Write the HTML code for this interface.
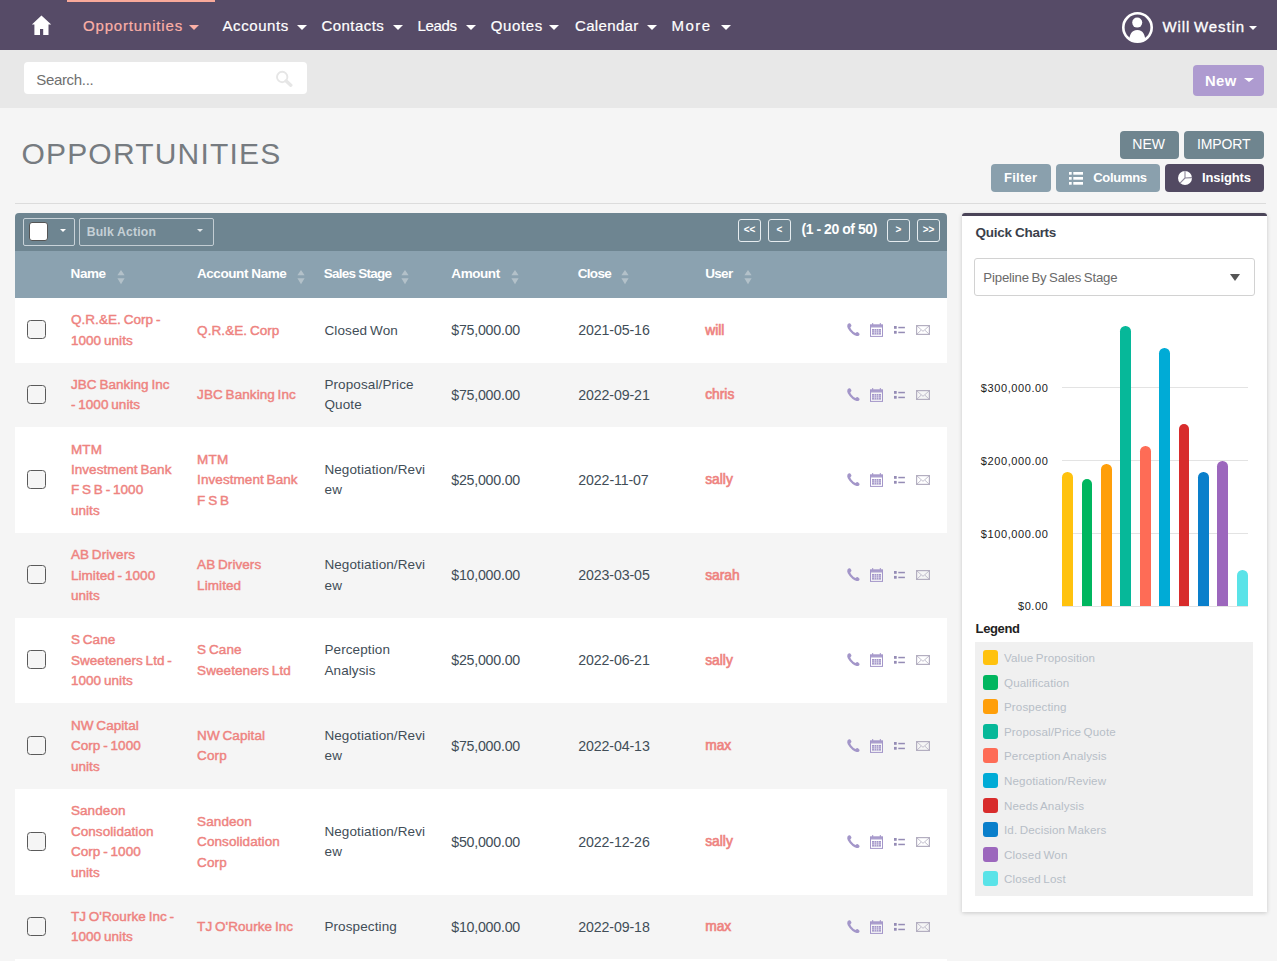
<!DOCTYPE html>
<html><head><meta charset="utf-8"><title>Opportunities</title>
<style>
html,body{margin:0;padding:0;}
body{width:1277px;height:961px;position:relative;overflow:hidden;background:#f5f5f5;font-family:"Liberation Sans", sans-serif;}
.t{position:absolute;white-space:nowrap;}
.caret{position:absolute;width:0;height:0;}
</style></head><body>
<div style="position:absolute;left:0;top:0;width:1277px;height:50px;background:#564b67"></div>
<div style="position:absolute;left:67px;top:0;width:148px;height:2px;background:#f9a99a"></div>
<svg style="position:absolute;left:31px;top:15px" width="21" height="21" viewBox="0 0 21 21"><path d="M10.45 0.4 L20.2 9.6 L17.5 9.6 L17.5 19.9 L12.2 19.9 L12.2 14.05 L9 14.05 L9 19.9 L3.4 19.9 L3.4 9.6 L0.9 9.6 Z" fill="#fff"/></svg>
<div class="t" style="left:83.00px;top:15.80px;font-size:15px;line-height:20px;color:#fbb0a6;font-weight:normal;letter-spacing:0.832px;-webkit-text-stroke:0.2px #fbb0a6;">Opportunities</div>
<div class="caret" style="left:188.5px;top:24.5px;border-left:5.0px solid transparent;border-right:5.0px solid transparent;border-top:5px solid #fbb0a6;"></div>
<div class="t" style="left:222.50px;top:15.80px;font-size:15px;line-height:20px;color:#fff;font-weight:normal;letter-spacing:0.586px;-webkit-text-stroke:0.2px #fff;">Accounts</div>
<div class="caret" style="left:297px;top:24.5px;border-left:5.0px solid transparent;border-right:5.0px solid transparent;border-top:5px solid #fff;"></div>
<div class="t" style="left:321.50px;top:15.80px;font-size:15px;line-height:20px;color:#fff;font-weight:normal;letter-spacing:0.444px;-webkit-text-stroke:0.2px #fff;">Contacts</div>
<div class="caret" style="left:392.5px;top:24.5px;border-left:5.0px solid transparent;border-right:5.0px solid transparent;border-top:5px solid #fff;"></div>
<div class="t" style="left:417.50px;top:15.80px;font-size:15px;line-height:20px;color:#fff;font-weight:normal;letter-spacing:-0.344px;-webkit-text-stroke:0.2px #fff;">Leads</div>
<div class="caret" style="left:465.6px;top:24.5px;border-left:5.0px solid transparent;border-right:5.0px solid transparent;border-top:5px solid #fff;"></div>
<div class="t" style="left:490.70px;top:15.80px;font-size:15px;line-height:20px;color:#fff;font-weight:normal;letter-spacing:0.648px;-webkit-text-stroke:0.2px #fff;">Quotes</div>
<div class="caret" style="left:549.4px;top:24.5px;border-left:5.0px solid transparent;border-right:5.0px solid transparent;border-top:5px solid #fff;"></div>
<div class="t" style="left:575.00px;top:15.80px;font-size:15px;line-height:20px;color:#fff;font-weight:normal;letter-spacing:0.347px;-webkit-text-stroke:0.2px #fff;">Calendar</div>
<div class="caret" style="left:647px;top:24.5px;border-left:5.0px solid transparent;border-right:5.0px solid transparent;border-top:5px solid #fff;"></div>
<div class="t" style="left:671.50px;top:15.80px;font-size:15px;line-height:20px;color:#fff;font-weight:normal;letter-spacing:1.443px;-webkit-text-stroke:0.2px #fff;">More</div>
<div class="caret" style="left:721.3px;top:24.5px;border-left:5.0px solid transparent;border-right:5.0px solid transparent;border-top:5px solid #fff;"></div>
<svg style="position:absolute;left:1121px;top:11px" width="33" height="33" viewBox="0 0 33 33"><defs><clipPath id="uc"><circle cx="16.5" cy="16.5" r="14"/></clipPath></defs><circle cx="16.5" cy="16.5" r="14.2" fill="none" stroke="#fff" stroke-width="2.6"/><circle cx="16.2" cy="11.6" r="5" fill="#fff"/><path d="M8 33 C8 25 9.5 19 16.3 19 C23 19 24.5 25 24.5 33 Z" fill="#fff" clip-path="url(#uc)"/></svg>
<div class="t" style="left:1162.60px;top:17.40px;font-size:15px;line-height:20px;color:#fff;font-weight:normal;letter-spacing:0.863px;-webkit-text-stroke:0.3px #fff;word-spacing:-1.12px;">Will Westin</div>
<div class="caret" style="left:1248.5px;top:25.5px;border-left:4.75px solid transparent;border-right:4.75px solid transparent;border-top:4.5px solid #fff;"></div>
<div style="position:absolute;left:0;top:50px;width:1277px;height:58px;background:#e8e8e8"></div>
<div style="position:absolute;left:24px;top:62px;width:283px;height:32px;background:#fff;border-radius:4px"></div>
<div class="t" style="left:36.20px;top:70.00px;font-size:15px;line-height:20px;color:#6f6f6f;font-weight:normal;letter-spacing:-0.316px;">Search...</div>
<svg style="position:absolute;left:275px;top:70px" width="20" height="17" viewBox="0 0 20 17"><circle cx="7.2" cy="7" r="5.2" fill="none" stroke="#e6e6e6" stroke-width="1.9"/><path d="M11.2 11 L15.8 15.2" stroke="#e6e6e6" stroke-width="3.4" stroke-linecap="round"/></svg>
<div style="position:absolute;left:1193px;top:65px;width:71px;height:31px;background:#ae9bd0;border-radius:4px"></div>
<div class="t" style="left:1205.00px;top:70.87px;font-size:14.8px;line-height:20px;color:#fff;font-weight:bold;letter-spacing:0.371px;">New</div>
<div class="caret" style="left:1244px;top:78px;border-left:5.0px solid transparent;border-right:5.0px solid transparent;border-top:4.5px solid #fff;"></div>
<div style="position:absolute;left:0;top:108px;width:1277px;height:853px;background:#f5f5f5"></div>
<div class="t" style="left:21.40px;top:143.60px;font-size:30px;line-height:20px;color:#767b80;font-weight:normal;letter-spacing:1.202px;">OPPORTUNITIES</div>
<div style="position:absolute;left:15px;top:203px;width:1251px;height:1px;background:#dcdcdc"></div>
<div style="position:absolute;left:1120px;top:131px;width:59px;height:28px;background:#6f858f;border-radius:4px"></div>
<div class="t" style="left:1132.30px;top:134.15px;font-size:14px;line-height:20px;color:#fff;font-weight:normal;letter-spacing:-0.031px;">NEW</div>
<div style="position:absolute;left:1184px;top:131px;width:80px;height:28px;background:#6f858f;border-radius:4px"></div>
<div class="t" style="left:1197.00px;top:134.15px;font-size:14px;line-height:20px;color:#fff;font-weight:normal;letter-spacing:-0.139px;">IMPORT</div>
<div style="position:absolute;left:991px;top:164px;width:60px;height:28px;background:#8aa0ad;border-radius:4px"></div>
<div class="t" style="left:1004.00px;top:167.50px;font-size:13px;line-height:20px;color:#fff;font-weight:bold;letter-spacing:0.243px;">Filter</div>
<div style="position:absolute;left:1056px;top:164px;width:104px;height:28px;background:#8aa0ad;border-radius:4px"></div>
<div class="t" style="left:1093.30px;top:167.50px;font-size:13px;line-height:20px;color:#fff;font-weight:bold;letter-spacing:-0.319px;">Columns</div>
<div style="position:absolute;left:1165px;top:164px;width:99px;height:28px;background:#524a62;border-radius:4px"></div>
<div class="t" style="left:1202.00px;top:167.50px;font-size:13px;line-height:20px;color:#fff;font-weight:bold;letter-spacing:-0.120px;">Insights</div>
<svg style="position:absolute;left:1069px;top:171.6px" width="14" height="13" viewBox="0 0 14 13"><g fill="#fff"><rect x="0" y="0" width="2.7" height="2.7"/><rect x="0" y="5" width="2.7" height="2.7"/><rect x="0" y="10" width="2.7" height="2.7"/><rect x="4.3" y="0" width="9.7" height="2.7"/><rect x="4.3" y="5" width="9.7" height="2.7"/><rect x="4.3" y="10" width="9.7" height="2.7"/></g></svg>
<svg style="position:absolute;left:1177px;top:170px" width="16" height="16" viewBox="0 0 16 16"><circle cx="8" cy="8" r="7" fill="#fff"/><path d="M8 8 L8 0.8 M8 8 L15.2 7.6 M8 8 L3 13.2" stroke="#8d8799" stroke-width="1.1"/></svg>
<div style="position:absolute;left:15px;top:213px;width:932px;height:38px;background:#6e8591;border-radius:4px 4px 0 0"></div>
<div style="position:absolute;left:15px;top:251px;width:932px;height:47px;background:#8ba2b0"></div>
<div style="position:absolute;left:23px;top:218px;width:50px;height:26px;border:1px solid #c9d3d9;border-radius:2px"></div>
<div style="position:absolute;left:28.5px;top:222px;width:17px;height:17px;background:#fff;border:1px solid #555;border-radius:3px"></div>
<div class="caret" style="left:60px;top:229px;border-left:3.5px solid transparent;border-right:3.5px solid transparent;border-top:3.5px solid #fff;"></div>
<div style="position:absolute;left:79px;top:218px;width:133px;height:26px;border:1px solid #c3cdd3;border-radius:2px"></div>
<div class="t" style="left:86.70px;top:221.77px;font-size:12.2px;line-height:20px;color:#c5d0d6;font-weight:bold;letter-spacing:0.197px;">Bulk Action</div>
<div class="caret" style="left:197px;top:229px;border-left:3.5px solid transparent;border-right:3.5px solid transparent;border-top:3.5px solid #dfe5e8;"></div>
<div style="position:absolute;left:738px;top:219px;width:21px;height:21px;border:1px solid #e6ecef;border-radius:3px"></div>
<div class="t" style="left:738px;top:219px;width:23px;height:23px;line-height:22px;text-align:center;font-size:10px;font-weight:bold;color:#fff">&lt;&lt;</div>
<div style="position:absolute;left:768px;top:219px;width:21px;height:21px;border:1px solid #e6ecef;border-radius:3px"></div>
<div class="t" style="left:768px;top:219px;width:23px;height:23px;line-height:22px;text-align:center;font-size:10px;font-weight:bold;color:#fff">&lt;</div>
<div style="position:absolute;left:887px;top:219px;width:21px;height:21px;border:1px solid #e6ecef;border-radius:3px"></div>
<div class="t" style="left:887px;top:219px;width:23px;height:23px;line-height:22px;text-align:center;font-size:10px;font-weight:bold;color:#fff">&gt;</div>
<div style="position:absolute;left:917px;top:219px;width:21px;height:21px;border:1px solid #e6ecef;border-radius:3px"></div>
<div class="t" style="left:917px;top:219px;width:23px;height:23px;line-height:22px;text-align:center;font-size:10px;font-weight:bold;color:#fff">&gt;&gt;</div>
<div class="t" style="left:801.50px;top:219.25px;font-size:14px;line-height:20px;color:#fff;font-weight:bold;letter-spacing:-0.453px;">(1 - 20 of 50)</div>
<div class="t" style="left:70.60px;top:263.52px;font-size:13.5px;line-height:20px;color:#fff;font-weight:bold;letter-spacing:-0.458px;">Name</div>
<svg style="position:absolute;left:116.8px;top:269.5px" width="8" height="15" viewBox="0 0 8 15"><path d="M4 0 L7.6 5.3 L0.4 5.3 Z M0.4 8.2 L7.6 8.2 L4 14.3 Z" fill="#b3c1c9"/></svg>
<div class="t" style="left:196.90px;top:263.52px;font-size:13.5px;line-height:20px;color:#fff;font-weight:bold;letter-spacing:-0.412px;">Account Name</div>
<svg style="position:absolute;left:297.0px;top:269.5px" width="8" height="15" viewBox="0 0 8 15"><path d="M4 0 L7.6 5.3 L0.4 5.3 Z M0.4 8.2 L7.6 8.2 L4 14.3 Z" fill="#b3c1c9"/></svg>
<div class="t" style="left:323.80px;top:263.52px;font-size:13.5px;line-height:20px;color:#fff;font-weight:bold;letter-spacing:-0.769px;">Sales Stage</div>
<svg style="position:absolute;left:401.3px;top:269.5px" width="8" height="15" viewBox="0 0 8 15"><path d="M4 0 L7.6 5.3 L0.4 5.3 Z M0.4 8.2 L7.6 8.2 L4 14.3 Z" fill="#b3c1c9"/></svg>
<div class="t" style="left:451.30px;top:263.52px;font-size:13.5px;line-height:20px;color:#fff;font-weight:bold;letter-spacing:-0.418px;">Amount</div>
<svg style="position:absolute;left:510.5px;top:269.5px" width="8" height="15" viewBox="0 0 8 15"><path d="M4 0 L7.6 5.3 L0.4 5.3 Z M0.4 8.2 L7.6 8.2 L4 14.3 Z" fill="#b3c1c9"/></svg>
<div class="t" style="left:577.80px;top:263.52px;font-size:13.5px;line-height:20px;color:#fff;font-weight:bold;letter-spacing:-0.715px;">Close</div>
<svg style="position:absolute;left:621.3px;top:269.5px" width="8" height="15" viewBox="0 0 8 15"><path d="M4 0 L7.6 5.3 L0.4 5.3 Z M0.4 8.2 L7.6 8.2 L4 14.3 Z" fill="#b3c1c9"/></svg>
<div class="t" style="left:705.20px;top:263.52px;font-size:13.5px;line-height:20px;color:#fff;font-weight:bold;letter-spacing:-0.675px;">User</div>
<svg style="position:absolute;left:744.0999999999999px;top:269.5px" width="8" height="15" viewBox="0 0 8 15"><path d="M4 0 L7.6 5.3 L0.4 5.3 Z M0.4 8.2 L7.6 8.2 L4 14.3 Z" fill="#b3c1c9"/></svg>
<div style="position:absolute;left:15px;top:297.80px;width:932px;height:65.30px;background:#ffffff"></div>
<div style="position:absolute;left:27px;top:320.45px;width:17px;height:17px;border:1.5px solid #5a5a5a;border-radius:3.5px;background:#f5f5f5"></div>
<div class="t" style="left:70.90px;top:310.43px;font-size:13.5px;line-height:20px;color:#ee8380;font-weight:normal;letter-spacing:0.068px;word-spacing:-1.05px;-webkit-text-stroke:0.45px #ee8380;">Q.R.&amp;E. Corp -</div>
<div class="t" style="left:70.90px;top:330.88px;font-size:13.5px;line-height:20px;color:#ee8380;font-weight:normal;letter-spacing:0.068px;word-spacing:-1.05px;-webkit-text-stroke:0.45px #ee8380;">1000 units</div>
<div class="t" style="left:197.10px;top:320.65px;font-size:13.5px;line-height:20px;color:#ee8380;font-weight:normal;letter-spacing:0.074px;word-spacing:-1.05px;-webkit-text-stroke:0.45px #ee8380;">Q.R.&amp;E. Corp</div>
<div class="t" style="left:324.40px;top:320.65px;font-size:13.5px;line-height:20px;color:#414d57;font-weight:normal;letter-spacing:0.128px;word-spacing:-1.05px;">Closed Won</div>
<div class="t" style="left:451.30px;top:320.41px;font-size:14.2px;line-height:20px;color:#414d57;font-weight:normal;letter-spacing:-0.237px;word-spacing:-1.05px;">$75,000.00</div>
<div class="t" style="left:578.30px;top:320.41px;font-size:14.2px;line-height:20px;color:#414d57;font-weight:normal;letter-spacing:-0.121px;word-spacing:-1.05px;">2021-05-16</div>
<div class="t" style="left:705.23px;top:320.55px;font-size:13.8px;line-height:20px;color:#ee8380;font-weight:normal;letter-spacing:0.000px;word-spacing:-1.05px;-webkit-text-stroke:0.65px #ee8380;">will</div>
<svg style="position:absolute;left:846px;top:322.25px" width="15" height="15" viewBox="0 0 15 15"><path d="M3.2 1.2 Q2 1.6 1.4 2.8 Q0.9 4.4 1.8 6.2 Q3.6 9.6 6.6 12 Q8.6 13.6 10.6 14 Q12 14.2 13 13.4 Q13.9 12.6 13.5 11.7 L12 10.2 Q11.2 9.6 10.5 10.2 L9.6 11 Q7.3 10 5.3 7.4 Q4.4 6 4.3 5.3 L5.1 4.6 Q5.8 3.9 5.3 3.1 L4.3 1.5 Q3.9 1 3.2 1.2 Z" fill="#a396c9"/></svg>
<svg style="position:absolute;left:870px;top:323.15px" width="13" height="14" viewBox="0 0 13 14"><rect x="2.2" y="0" width="1" height="2.2" fill="#a396c9"/><rect x="9.8" y="0" width="1" height="2.2" fill="#a396c9"/><rect x="0" y="1.6" width="13" height="2.9" fill="#a396c9" opacity="0.9"/><rect x="0.5" y="2" width="12" height="11.4" fill="none" stroke="#a396c9" stroke-width="1"/><rect x="2" y="6" width="9" height="5.6" fill="#a396c9"/><g fill="#fff" opacity="0.75"><rect x="4.1" y="6" width="0.6" height="5.6"/><rect x="6.2" y="6" width="0.6" height="5.6"/><rect x="8.3" y="6" width="0.6" height="5.6"/><rect x="2" y="7.7" width="9" height="0.5"/><rect x="2" y="9.6" width="9" height="0.5"/></g></svg>
<svg style="position:absolute;left:894px;top:326.15px" width="11" height="8" viewBox="0 0 11 8"><g fill="#958cb5"><rect x="0" y="0" width="2.7" height="2.8"/><rect x="0" y="4.9" width="2.7" height="2.8"/><rect x="4.3" y="0.8" width="6.6" height="1.5"/><rect x="4.3" y="5.7" width="6.6" height="1.5"/></g></svg>
<svg style="position:absolute;left:916px;top:325.45px" width="14" height="10" viewBox="0 0 14 10"><rect x="0.6" y="0.6" width="12.8" height="8.8" fill="none" stroke="#b3aec0" stroke-width="1.2"/><path d="M1 1 L7 6.3 L13 1 M1 9 L5 5.3 M13 9 L9 5.3" fill="none" stroke="#b3aec0" stroke-width="0.8"/></svg>
<div style="position:absolute;left:15px;top:363.10px;width:932px;height:63.80px;background:#f5f5f5"></div>
<div style="position:absolute;left:27px;top:385.00px;width:17px;height:17px;border:1.5px solid #5a5a5a;border-radius:3.5px;background:#f5f5f5"></div>
<div class="t" style="left:70.90px;top:374.98px;font-size:13.5px;line-height:20px;color:#ee8380;font-weight:normal;letter-spacing:0.070px;word-spacing:-1.05px;-webkit-text-stroke:0.45px #ee8380;">JBC Banking Inc</div>
<div class="t" style="left:70.90px;top:395.43px;font-size:13.5px;line-height:20px;color:#ee8380;font-weight:normal;letter-spacing:0.062px;word-spacing:-1.05px;-webkit-text-stroke:0.45px #ee8380;">- 1000 units</div>
<div class="t" style="left:197.10px;top:385.20px;font-size:13.5px;line-height:20px;color:#ee8380;font-weight:normal;letter-spacing:0.070px;word-spacing:-1.05px;-webkit-text-stroke:0.45px #ee8380;">JBC Banking Inc</div>
<div class="t" style="left:324.40px;top:374.98px;font-size:13.5px;line-height:20px;color:#414d57;font-weight:normal;letter-spacing:0.108px;word-spacing:-1.05px;">Proposal/Price</div>
<div class="t" style="left:324.40px;top:395.43px;font-size:13.5px;line-height:20px;color:#414d57;font-weight:normal;letter-spacing:0.147px;word-spacing:-1.05px;">Quote</div>
<div class="t" style="left:451.30px;top:384.96px;font-size:14.2px;line-height:20px;color:#414d57;font-weight:normal;letter-spacing:-0.237px;word-spacing:-1.05px;">$75,000.00</div>
<div class="t" style="left:578.30px;top:384.96px;font-size:14.2px;line-height:20px;color:#414d57;font-weight:normal;letter-spacing:-0.121px;word-spacing:-1.05px;">2022-09-21</div>
<div class="t" style="left:705.20px;top:385.10px;font-size:13.8px;line-height:20px;color:#ee8380;font-weight:normal;letter-spacing:0.000px;word-spacing:-1.05px;-webkit-text-stroke:0.65px #ee8380;">chris</div>
<svg style="position:absolute;left:846px;top:386.80px" width="15" height="15" viewBox="0 0 15 15"><path d="M3.2 1.2 Q2 1.6 1.4 2.8 Q0.9 4.4 1.8 6.2 Q3.6 9.6 6.6 12 Q8.6 13.6 10.6 14 Q12 14.2 13 13.4 Q13.9 12.6 13.5 11.7 L12 10.2 Q11.2 9.6 10.5 10.2 L9.6 11 Q7.3 10 5.3 7.4 Q4.4 6 4.3 5.3 L5.1 4.6 Q5.8 3.9 5.3 3.1 L4.3 1.5 Q3.9 1 3.2 1.2 Z" fill="#a396c9"/></svg>
<svg style="position:absolute;left:870px;top:387.70px" width="13" height="14" viewBox="0 0 13 14"><rect x="2.2" y="0" width="1" height="2.2" fill="#a396c9"/><rect x="9.8" y="0" width="1" height="2.2" fill="#a396c9"/><rect x="0" y="1.6" width="13" height="2.9" fill="#a396c9" opacity="0.9"/><rect x="0.5" y="2" width="12" height="11.4" fill="none" stroke="#a396c9" stroke-width="1"/><rect x="2" y="6" width="9" height="5.6" fill="#a396c9"/><g fill="#fff" opacity="0.75"><rect x="4.1" y="6" width="0.6" height="5.6"/><rect x="6.2" y="6" width="0.6" height="5.6"/><rect x="8.3" y="6" width="0.6" height="5.6"/><rect x="2" y="7.7" width="9" height="0.5"/><rect x="2" y="9.6" width="9" height="0.5"/></g></svg>
<svg style="position:absolute;left:894px;top:390.70px" width="11" height="8" viewBox="0 0 11 8"><g fill="#958cb5"><rect x="0" y="0" width="2.7" height="2.8"/><rect x="0" y="4.9" width="2.7" height="2.8"/><rect x="4.3" y="0.8" width="6.6" height="1.5"/><rect x="4.3" y="5.7" width="6.6" height="1.5"/></g></svg>
<svg style="position:absolute;left:916px;top:390.00px" width="14" height="10" viewBox="0 0 14 10"><rect x="0.6" y="0.6" width="12.8" height="8.8" fill="none" stroke="#b3aec0" stroke-width="1.2"/><path d="M1 1 L7 6.3 L13 1 M1 9 L5 5.3 M13 9 L9 5.3" fill="none" stroke="#b3aec0" stroke-width="0.8"/></svg>
<div style="position:absolute;left:15px;top:426.90px;width:932px;height:106.20px;background:#ffffff"></div>
<div style="position:absolute;left:27px;top:470.00px;width:17px;height:17px;border:1.5px solid #5a5a5a;border-radius:3.5px;background:#f5f5f5"></div>
<div class="t" style="left:70.90px;top:439.53px;font-size:13.5px;line-height:20px;color:#ee8380;font-weight:normal;letter-spacing:0.154px;word-spacing:-1.05px;-webkit-text-stroke:0.45px #ee8380;">MTM</div>
<div class="t" style="left:70.90px;top:459.98px;font-size:13.5px;line-height:20px;color:#ee8380;font-weight:normal;letter-spacing:0.071px;word-spacing:-1.05px;-webkit-text-stroke:0.45px #ee8380;">Investment Bank</div>
<div class="t" style="left:70.90px;top:480.43px;font-size:13.5px;line-height:20px;color:#ee8380;font-weight:normal;letter-spacing:0.065px;word-spacing:-1.05px;-webkit-text-stroke:0.45px #ee8380;">F S B - 1000</div>
<div class="t" style="left:70.90px;top:500.88px;font-size:13.5px;line-height:20px;color:#ee8380;font-weight:normal;letter-spacing:0.071px;word-spacing:-1.05px;-webkit-text-stroke:0.45px #ee8380;">units</div>
<div class="t" style="left:197.10px;top:449.75px;font-size:13.5px;line-height:20px;color:#ee8380;font-weight:normal;letter-spacing:0.154px;word-spacing:-1.05px;-webkit-text-stroke:0.45px #ee8380;">MTM</div>
<div class="t" style="left:197.10px;top:470.20px;font-size:13.5px;line-height:20px;color:#ee8380;font-weight:normal;letter-spacing:0.071px;word-spacing:-1.05px;-webkit-text-stroke:0.45px #ee8380;">Investment Bank</div>
<div class="t" style="left:197.10px;top:490.65px;font-size:13.5px;line-height:20px;color:#ee8380;font-weight:normal;letter-spacing:0.079px;word-spacing:-1.05px;-webkit-text-stroke:0.45px #ee8380;">F S B</div>
<div class="t" style="left:324.40px;top:459.98px;font-size:13.5px;line-height:20px;color:#414d57;font-weight:normal;letter-spacing:0.106px;word-spacing:-1.05px;">Negotiation/Revi</div>
<div class="t" style="left:324.40px;top:480.43px;font-size:13.5px;line-height:20px;color:#414d57;font-weight:normal;letter-spacing:0.277px;word-spacing:-1.05px;">ew</div>
<div class="t" style="left:451.30px;top:469.96px;font-size:14.2px;line-height:20px;color:#414d57;font-weight:normal;letter-spacing:-0.237px;word-spacing:-1.05px;">$25,000.00</div>
<div class="t" style="left:578.30px;top:469.96px;font-size:14.2px;line-height:20px;color:#414d57;font-weight:normal;letter-spacing:-0.119px;word-spacing:-1.05px;">2022-11-07</div>
<div class="t" style="left:705.20px;top:470.10px;font-size:13.8px;line-height:20px;color:#ee8380;font-weight:normal;letter-spacing:0.000px;word-spacing:-1.05px;-webkit-text-stroke:0.65px #ee8380;">sally</div>
<svg style="position:absolute;left:846px;top:471.80px" width="15" height="15" viewBox="0 0 15 15"><path d="M3.2 1.2 Q2 1.6 1.4 2.8 Q0.9 4.4 1.8 6.2 Q3.6 9.6 6.6 12 Q8.6 13.6 10.6 14 Q12 14.2 13 13.4 Q13.9 12.6 13.5 11.7 L12 10.2 Q11.2 9.6 10.5 10.2 L9.6 11 Q7.3 10 5.3 7.4 Q4.4 6 4.3 5.3 L5.1 4.6 Q5.8 3.9 5.3 3.1 L4.3 1.5 Q3.9 1 3.2 1.2 Z" fill="#a396c9"/></svg>
<svg style="position:absolute;left:870px;top:472.70px" width="13" height="14" viewBox="0 0 13 14"><rect x="2.2" y="0" width="1" height="2.2" fill="#a396c9"/><rect x="9.8" y="0" width="1" height="2.2" fill="#a396c9"/><rect x="0" y="1.6" width="13" height="2.9" fill="#a396c9" opacity="0.9"/><rect x="0.5" y="2" width="12" height="11.4" fill="none" stroke="#a396c9" stroke-width="1"/><rect x="2" y="6" width="9" height="5.6" fill="#a396c9"/><g fill="#fff" opacity="0.75"><rect x="4.1" y="6" width="0.6" height="5.6"/><rect x="6.2" y="6" width="0.6" height="5.6"/><rect x="8.3" y="6" width="0.6" height="5.6"/><rect x="2" y="7.7" width="9" height="0.5"/><rect x="2" y="9.6" width="9" height="0.5"/></g></svg>
<svg style="position:absolute;left:894px;top:475.70px" width="11" height="8" viewBox="0 0 11 8"><g fill="#958cb5"><rect x="0" y="0" width="2.7" height="2.8"/><rect x="0" y="4.9" width="2.7" height="2.8"/><rect x="4.3" y="0.8" width="6.6" height="1.5"/><rect x="4.3" y="5.7" width="6.6" height="1.5"/></g></svg>
<svg style="position:absolute;left:916px;top:475.00px" width="14" height="10" viewBox="0 0 14 10"><rect x="0.6" y="0.6" width="12.8" height="8.8" fill="none" stroke="#b3aec0" stroke-width="1.2"/><path d="M1 1 L7 6.3 L13 1 M1 9 L5 5.3 M13 9 L9 5.3" fill="none" stroke="#b3aec0" stroke-width="0.8"/></svg>
<div style="position:absolute;left:15px;top:533.10px;width:932px;height:84.70px;background:#f5f5f5"></div>
<div style="position:absolute;left:27px;top:565.45px;width:17px;height:17px;border:1.5px solid #5a5a5a;border-radius:3.5px;background:#f5f5f5"></div>
<div class="t" style="left:70.90px;top:545.20px;font-size:13.5px;line-height:20px;color:#ee8380;font-weight:normal;letter-spacing:0.071px;word-spacing:-1.05px;-webkit-text-stroke:0.45px #ee8380;">AB Drivers</div>
<div class="t" style="left:70.90px;top:565.65px;font-size:13.5px;line-height:20px;color:#ee8380;font-weight:normal;letter-spacing:0.064px;word-spacing:-1.05px;-webkit-text-stroke:0.45px #ee8380;">Limited - 1000</div>
<div class="t" style="left:70.90px;top:586.10px;font-size:13.5px;line-height:20px;color:#ee8380;font-weight:normal;letter-spacing:0.071px;word-spacing:-1.05px;-webkit-text-stroke:0.45px #ee8380;">units</div>
<div class="t" style="left:197.10px;top:555.43px;font-size:13.5px;line-height:20px;color:#ee8380;font-weight:normal;letter-spacing:0.071px;word-spacing:-1.05px;-webkit-text-stroke:0.45px #ee8380;">AB Drivers</div>
<div class="t" style="left:197.10px;top:575.88px;font-size:13.5px;line-height:20px;color:#ee8380;font-weight:normal;letter-spacing:0.073px;word-spacing:-1.05px;-webkit-text-stroke:0.45px #ee8380;">Limited</div>
<div class="t" style="left:324.40px;top:555.43px;font-size:13.5px;line-height:20px;color:#414d57;font-weight:normal;letter-spacing:0.106px;word-spacing:-1.05px;">Negotiation/Revi</div>
<div class="t" style="left:324.40px;top:575.88px;font-size:13.5px;line-height:20px;color:#414d57;font-weight:normal;letter-spacing:0.277px;word-spacing:-1.05px;">ew</div>
<div class="t" style="left:451.30px;top:565.41px;font-size:14.2px;line-height:20px;color:#414d57;font-weight:normal;letter-spacing:-0.237px;word-spacing:-1.05px;">$10,000.00</div>
<div class="t" style="left:578.30px;top:565.41px;font-size:14.2px;line-height:20px;color:#414d57;font-weight:normal;letter-spacing:-0.121px;word-spacing:-1.05px;">2023-03-05</div>
<div class="t" style="left:705.20px;top:565.55px;font-size:13.8px;line-height:20px;color:#ee8380;font-weight:normal;letter-spacing:0.000px;word-spacing:-1.05px;-webkit-text-stroke:0.65px #ee8380;">sarah</div>
<svg style="position:absolute;left:846px;top:567.25px" width="15" height="15" viewBox="0 0 15 15"><path d="M3.2 1.2 Q2 1.6 1.4 2.8 Q0.9 4.4 1.8 6.2 Q3.6 9.6 6.6 12 Q8.6 13.6 10.6 14 Q12 14.2 13 13.4 Q13.9 12.6 13.5 11.7 L12 10.2 Q11.2 9.6 10.5 10.2 L9.6 11 Q7.3 10 5.3 7.4 Q4.4 6 4.3 5.3 L5.1 4.6 Q5.8 3.9 5.3 3.1 L4.3 1.5 Q3.9 1 3.2 1.2 Z" fill="#a396c9"/></svg>
<svg style="position:absolute;left:870px;top:568.15px" width="13" height="14" viewBox="0 0 13 14"><rect x="2.2" y="0" width="1" height="2.2" fill="#a396c9"/><rect x="9.8" y="0" width="1" height="2.2" fill="#a396c9"/><rect x="0" y="1.6" width="13" height="2.9" fill="#a396c9" opacity="0.9"/><rect x="0.5" y="2" width="12" height="11.4" fill="none" stroke="#a396c9" stroke-width="1"/><rect x="2" y="6" width="9" height="5.6" fill="#a396c9"/><g fill="#fff" opacity="0.75"><rect x="4.1" y="6" width="0.6" height="5.6"/><rect x="6.2" y="6" width="0.6" height="5.6"/><rect x="8.3" y="6" width="0.6" height="5.6"/><rect x="2" y="7.7" width="9" height="0.5"/><rect x="2" y="9.6" width="9" height="0.5"/></g></svg>
<svg style="position:absolute;left:894px;top:571.15px" width="11" height="8" viewBox="0 0 11 8"><g fill="#958cb5"><rect x="0" y="0" width="2.7" height="2.8"/><rect x="0" y="4.9" width="2.7" height="2.8"/><rect x="4.3" y="0.8" width="6.6" height="1.5"/><rect x="4.3" y="5.7" width="6.6" height="1.5"/></g></svg>
<svg style="position:absolute;left:916px;top:570.45px" width="14" height="10" viewBox="0 0 14 10"><rect x="0.6" y="0.6" width="12.8" height="8.8" fill="none" stroke="#b3aec0" stroke-width="1.2"/><path d="M1 1 L7 6.3 L13 1 M1 9 L5 5.3 M13 9 L9 5.3" fill="none" stroke="#b3aec0" stroke-width="0.8"/></svg>
<div style="position:absolute;left:15px;top:617.80px;width:932px;height:85.30px;background:#ffffff"></div>
<div style="position:absolute;left:27px;top:650.45px;width:17px;height:17px;border:1.5px solid #5a5a5a;border-radius:3.5px;background:#f5f5f5"></div>
<div class="t" style="left:70.90px;top:630.20px;font-size:13.5px;line-height:20px;color:#ee8380;font-weight:normal;letter-spacing:0.088px;word-spacing:-1.05px;-webkit-text-stroke:0.45px #ee8380;">S Cane</div>
<div class="t" style="left:70.90px;top:650.65px;font-size:13.5px;line-height:20px;color:#ee8380;font-weight:normal;letter-spacing:0.067px;word-spacing:-1.05px;-webkit-text-stroke:0.45px #ee8380;">Sweeteners Ltd -</div>
<div class="t" style="left:70.90px;top:671.10px;font-size:13.5px;line-height:20px;color:#ee8380;font-weight:normal;letter-spacing:0.068px;word-spacing:-1.05px;-webkit-text-stroke:0.45px #ee8380;">1000 units</div>
<div class="t" style="left:197.10px;top:640.43px;font-size:13.5px;line-height:20px;color:#ee8380;font-weight:normal;letter-spacing:0.088px;word-spacing:-1.05px;-webkit-text-stroke:0.45px #ee8380;">S Cane</div>
<div class="t" style="left:197.10px;top:660.88px;font-size:13.5px;line-height:20px;color:#ee8380;font-weight:normal;letter-spacing:0.071px;word-spacing:-1.05px;-webkit-text-stroke:0.45px #ee8380;">Sweeteners Ltd</div>
<div class="t" style="left:324.40px;top:640.43px;font-size:13.5px;line-height:20px;color:#414d57;font-weight:normal;letter-spacing:0.115px;word-spacing:-1.05px;">Perception</div>
<div class="t" style="left:324.40px;top:660.88px;font-size:13.5px;line-height:20px;color:#414d57;font-weight:normal;letter-spacing:0.115px;word-spacing:-1.05px;">Analysis</div>
<div class="t" style="left:451.30px;top:650.41px;font-size:14.2px;line-height:20px;color:#414d57;font-weight:normal;letter-spacing:-0.237px;word-spacing:-1.05px;">$25,000.00</div>
<div class="t" style="left:578.30px;top:650.41px;font-size:14.2px;line-height:20px;color:#414d57;font-weight:normal;letter-spacing:-0.121px;word-spacing:-1.05px;">2022-06-21</div>
<div class="t" style="left:705.20px;top:650.55px;font-size:13.8px;line-height:20px;color:#ee8380;font-weight:normal;letter-spacing:0.000px;word-spacing:-1.05px;-webkit-text-stroke:0.65px #ee8380;">sally</div>
<svg style="position:absolute;left:846px;top:652.25px" width="15" height="15" viewBox="0 0 15 15"><path d="M3.2 1.2 Q2 1.6 1.4 2.8 Q0.9 4.4 1.8 6.2 Q3.6 9.6 6.6 12 Q8.6 13.6 10.6 14 Q12 14.2 13 13.4 Q13.9 12.6 13.5 11.7 L12 10.2 Q11.2 9.6 10.5 10.2 L9.6 11 Q7.3 10 5.3 7.4 Q4.4 6 4.3 5.3 L5.1 4.6 Q5.8 3.9 5.3 3.1 L4.3 1.5 Q3.9 1 3.2 1.2 Z" fill="#a396c9"/></svg>
<svg style="position:absolute;left:870px;top:653.15px" width="13" height="14" viewBox="0 0 13 14"><rect x="2.2" y="0" width="1" height="2.2" fill="#a396c9"/><rect x="9.8" y="0" width="1" height="2.2" fill="#a396c9"/><rect x="0" y="1.6" width="13" height="2.9" fill="#a396c9" opacity="0.9"/><rect x="0.5" y="2" width="12" height="11.4" fill="none" stroke="#a396c9" stroke-width="1"/><rect x="2" y="6" width="9" height="5.6" fill="#a396c9"/><g fill="#fff" opacity="0.75"><rect x="4.1" y="6" width="0.6" height="5.6"/><rect x="6.2" y="6" width="0.6" height="5.6"/><rect x="8.3" y="6" width="0.6" height="5.6"/><rect x="2" y="7.7" width="9" height="0.5"/><rect x="2" y="9.6" width="9" height="0.5"/></g></svg>
<svg style="position:absolute;left:894px;top:656.15px" width="11" height="8" viewBox="0 0 11 8"><g fill="#958cb5"><rect x="0" y="0" width="2.7" height="2.8"/><rect x="0" y="4.9" width="2.7" height="2.8"/><rect x="4.3" y="0.8" width="6.6" height="1.5"/><rect x="4.3" y="5.7" width="6.6" height="1.5"/></g></svg>
<svg style="position:absolute;left:916px;top:655.45px" width="14" height="10" viewBox="0 0 14 10"><rect x="0.6" y="0.6" width="12.8" height="8.8" fill="none" stroke="#b3aec0" stroke-width="1.2"/><path d="M1 1 L7 6.3 L13 1 M1 9 L5 5.3 M13 9 L9 5.3" fill="none" stroke="#b3aec0" stroke-width="0.8"/></svg>
<div style="position:absolute;left:15px;top:703.10px;width:932px;height:85.90px;background:#f5f5f5"></div>
<div style="position:absolute;left:27px;top:736.05px;width:17px;height:17px;border:1.5px solid #5a5a5a;border-radius:3.5px;background:#f5f5f5"></div>
<div class="t" style="left:70.90px;top:715.80px;font-size:13.5px;line-height:20px;color:#ee8380;font-weight:normal;letter-spacing:0.075px;word-spacing:-1.05px;-webkit-text-stroke:0.45px #ee8380;">NW Capital</div>
<div class="t" style="left:70.90px;top:736.25px;font-size:13.5px;line-height:20px;color:#ee8380;font-weight:normal;letter-spacing:0.069px;word-spacing:-1.05px;-webkit-text-stroke:0.45px #ee8380;">Corp - 1000</div>
<div class="t" style="left:70.90px;top:756.70px;font-size:13.5px;line-height:20px;color:#ee8380;font-weight:normal;letter-spacing:0.071px;word-spacing:-1.05px;-webkit-text-stroke:0.45px #ee8380;">units</div>
<div class="t" style="left:197.10px;top:726.02px;font-size:13.5px;line-height:20px;color:#ee8380;font-weight:normal;letter-spacing:0.075px;word-spacing:-1.05px;-webkit-text-stroke:0.45px #ee8380;">NW Capital</div>
<div class="t" style="left:197.10px;top:746.48px;font-size:13.5px;line-height:20px;color:#ee8380;font-weight:normal;letter-spacing:0.098px;word-spacing:-1.05px;-webkit-text-stroke:0.45px #ee8380;">Corp</div>
<div class="t" style="left:324.40px;top:726.02px;font-size:13.5px;line-height:20px;color:#414d57;font-weight:normal;letter-spacing:0.106px;word-spacing:-1.05px;">Negotiation/Revi</div>
<div class="t" style="left:324.40px;top:746.48px;font-size:13.5px;line-height:20px;color:#414d57;font-weight:normal;letter-spacing:0.277px;word-spacing:-1.05px;">ew</div>
<div class="t" style="left:451.30px;top:736.01px;font-size:14.2px;line-height:20px;color:#414d57;font-weight:normal;letter-spacing:-0.237px;word-spacing:-1.05px;">$75,000.00</div>
<div class="t" style="left:578.30px;top:736.01px;font-size:14.2px;line-height:20px;color:#414d57;font-weight:normal;letter-spacing:-0.121px;word-spacing:-1.05px;">2022-04-13</div>
<div class="t" style="left:705.20px;top:736.15px;font-size:13.8px;line-height:20px;color:#ee8380;font-weight:normal;letter-spacing:0.000px;word-spacing:-1.05px;-webkit-text-stroke:0.65px #ee8380;">max</div>
<svg style="position:absolute;left:846px;top:737.85px" width="15" height="15" viewBox="0 0 15 15"><path d="M3.2 1.2 Q2 1.6 1.4 2.8 Q0.9 4.4 1.8 6.2 Q3.6 9.6 6.6 12 Q8.6 13.6 10.6 14 Q12 14.2 13 13.4 Q13.9 12.6 13.5 11.7 L12 10.2 Q11.2 9.6 10.5 10.2 L9.6 11 Q7.3 10 5.3 7.4 Q4.4 6 4.3 5.3 L5.1 4.6 Q5.8 3.9 5.3 3.1 L4.3 1.5 Q3.9 1 3.2 1.2 Z" fill="#a396c9"/></svg>
<svg style="position:absolute;left:870px;top:738.75px" width="13" height="14" viewBox="0 0 13 14"><rect x="2.2" y="0" width="1" height="2.2" fill="#a396c9"/><rect x="9.8" y="0" width="1" height="2.2" fill="#a396c9"/><rect x="0" y="1.6" width="13" height="2.9" fill="#a396c9" opacity="0.9"/><rect x="0.5" y="2" width="12" height="11.4" fill="none" stroke="#a396c9" stroke-width="1"/><rect x="2" y="6" width="9" height="5.6" fill="#a396c9"/><g fill="#fff" opacity="0.75"><rect x="4.1" y="6" width="0.6" height="5.6"/><rect x="6.2" y="6" width="0.6" height="5.6"/><rect x="8.3" y="6" width="0.6" height="5.6"/><rect x="2" y="7.7" width="9" height="0.5"/><rect x="2" y="9.6" width="9" height="0.5"/></g></svg>
<svg style="position:absolute;left:894px;top:741.75px" width="11" height="8" viewBox="0 0 11 8"><g fill="#958cb5"><rect x="0" y="0" width="2.7" height="2.8"/><rect x="0" y="4.9" width="2.7" height="2.8"/><rect x="4.3" y="0.8" width="6.6" height="1.5"/><rect x="4.3" y="5.7" width="6.6" height="1.5"/></g></svg>
<svg style="position:absolute;left:916px;top:741.05px" width="14" height="10" viewBox="0 0 14 10"><rect x="0.6" y="0.6" width="12.8" height="8.8" fill="none" stroke="#b3aec0" stroke-width="1.2"/><path d="M1 1 L7 6.3 L13 1 M1 9 L5 5.3 M13 9 L9 5.3" fill="none" stroke="#b3aec0" stroke-width="0.8"/></svg>
<div style="position:absolute;left:15px;top:789.00px;width:932px;height:105.70px;background:#ffffff"></div>
<div style="position:absolute;left:27px;top:831.85px;width:17px;height:17px;border:1.5px solid #5a5a5a;border-radius:3.5px;background:#f5f5f5"></div>
<div class="t" style="left:70.90px;top:801.38px;font-size:13.5px;line-height:20px;color:#ee8380;font-weight:normal;letter-spacing:0.090px;word-spacing:-1.05px;-webkit-text-stroke:0.45px #ee8380;">Sandeon</div>
<div class="t" style="left:70.90px;top:821.83px;font-size:13.5px;line-height:20px;color:#ee8380;font-weight:normal;letter-spacing:0.068px;word-spacing:-1.05px;-webkit-text-stroke:0.45px #ee8380;">Consolidation</div>
<div class="t" style="left:70.90px;top:842.28px;font-size:13.5px;line-height:20px;color:#ee8380;font-weight:normal;letter-spacing:0.069px;word-spacing:-1.05px;-webkit-text-stroke:0.45px #ee8380;">Corp - 1000</div>
<div class="t" style="left:70.90px;top:862.73px;font-size:13.5px;line-height:20px;color:#ee8380;font-weight:normal;letter-spacing:0.071px;word-spacing:-1.05px;-webkit-text-stroke:0.45px #ee8380;">units</div>
<div class="t" style="left:197.10px;top:811.60px;font-size:13.5px;line-height:20px;color:#ee8380;font-weight:normal;letter-spacing:0.090px;word-spacing:-1.05px;-webkit-text-stroke:0.45px #ee8380;">Sandeon</div>
<div class="t" style="left:197.10px;top:832.05px;font-size:13.5px;line-height:20px;color:#ee8380;font-weight:normal;letter-spacing:0.068px;word-spacing:-1.05px;-webkit-text-stroke:0.45px #ee8380;">Consolidation</div>
<div class="t" style="left:197.10px;top:852.50px;font-size:13.5px;line-height:20px;color:#ee8380;font-weight:normal;letter-spacing:0.098px;word-spacing:-1.05px;-webkit-text-stroke:0.45px #ee8380;">Corp</div>
<div class="t" style="left:324.40px;top:821.83px;font-size:13.5px;line-height:20px;color:#414d57;font-weight:normal;letter-spacing:0.106px;word-spacing:-1.05px;">Negotiation/Revi</div>
<div class="t" style="left:324.40px;top:842.28px;font-size:13.5px;line-height:20px;color:#414d57;font-weight:normal;letter-spacing:0.277px;word-spacing:-1.05px;">ew</div>
<div class="t" style="left:451.30px;top:831.81px;font-size:14.2px;line-height:20px;color:#414d57;font-weight:normal;letter-spacing:-0.237px;word-spacing:-1.05px;">$50,000.00</div>
<div class="t" style="left:578.30px;top:831.81px;font-size:14.2px;line-height:20px;color:#414d57;font-weight:normal;letter-spacing:-0.121px;word-spacing:-1.05px;">2022-12-26</div>
<div class="t" style="left:705.20px;top:831.95px;font-size:13.8px;line-height:20px;color:#ee8380;font-weight:normal;letter-spacing:0.000px;word-spacing:-1.05px;-webkit-text-stroke:0.65px #ee8380;">sally</div>
<svg style="position:absolute;left:846px;top:833.65px" width="15" height="15" viewBox="0 0 15 15"><path d="M3.2 1.2 Q2 1.6 1.4 2.8 Q0.9 4.4 1.8 6.2 Q3.6 9.6 6.6 12 Q8.6 13.6 10.6 14 Q12 14.2 13 13.4 Q13.9 12.6 13.5 11.7 L12 10.2 Q11.2 9.6 10.5 10.2 L9.6 11 Q7.3 10 5.3 7.4 Q4.4 6 4.3 5.3 L5.1 4.6 Q5.8 3.9 5.3 3.1 L4.3 1.5 Q3.9 1 3.2 1.2 Z" fill="#a396c9"/></svg>
<svg style="position:absolute;left:870px;top:834.55px" width="13" height="14" viewBox="0 0 13 14"><rect x="2.2" y="0" width="1" height="2.2" fill="#a396c9"/><rect x="9.8" y="0" width="1" height="2.2" fill="#a396c9"/><rect x="0" y="1.6" width="13" height="2.9" fill="#a396c9" opacity="0.9"/><rect x="0.5" y="2" width="12" height="11.4" fill="none" stroke="#a396c9" stroke-width="1"/><rect x="2" y="6" width="9" height="5.6" fill="#a396c9"/><g fill="#fff" opacity="0.75"><rect x="4.1" y="6" width="0.6" height="5.6"/><rect x="6.2" y="6" width="0.6" height="5.6"/><rect x="8.3" y="6" width="0.6" height="5.6"/><rect x="2" y="7.7" width="9" height="0.5"/><rect x="2" y="9.6" width="9" height="0.5"/></g></svg>
<svg style="position:absolute;left:894px;top:837.55px" width="11" height="8" viewBox="0 0 11 8"><g fill="#958cb5"><rect x="0" y="0" width="2.7" height="2.8"/><rect x="0" y="4.9" width="2.7" height="2.8"/><rect x="4.3" y="0.8" width="6.6" height="1.5"/><rect x="4.3" y="5.7" width="6.6" height="1.5"/></g></svg>
<svg style="position:absolute;left:916px;top:836.85px" width="14" height="10" viewBox="0 0 14 10"><rect x="0.6" y="0.6" width="12.8" height="8.8" fill="none" stroke="#b3aec0" stroke-width="1.2"/><path d="M1 1 L7 6.3 L13 1 M1 9 L5 5.3 M13 9 L9 5.3" fill="none" stroke="#b3aec0" stroke-width="0.8"/></svg>
<div style="position:absolute;left:15px;top:894.70px;width:932px;height:64.30px;background:#f5f5f5"></div>
<div style="position:absolute;left:27px;top:916.85px;width:17px;height:17px;border:1.5px solid #5a5a5a;border-radius:3.5px;background:#f5f5f5"></div>
<div class="t" style="left:70.90px;top:906.83px;font-size:13.5px;line-height:20px;color:#ee8380;font-weight:normal;letter-spacing:0.064px;word-spacing:-1.05px;-webkit-text-stroke:0.45px #ee8380;">TJ O&#x27;Rourke Inc -</div>
<div class="t" style="left:70.90px;top:927.28px;font-size:13.5px;line-height:20px;color:#ee8380;font-weight:normal;letter-spacing:0.068px;word-spacing:-1.05px;-webkit-text-stroke:0.45px #ee8380;">1000 units</div>
<div class="t" style="left:197.10px;top:917.05px;font-size:13.5px;line-height:20px;color:#ee8380;font-weight:normal;letter-spacing:0.068px;word-spacing:-1.05px;-webkit-text-stroke:0.45px #ee8380;">TJ O&#x27;Rourke Inc</div>
<div class="t" style="left:324.40px;top:917.05px;font-size:13.5px;line-height:20px;color:#414d57;font-weight:normal;letter-spacing:0.114px;word-spacing:-1.05px;">Prospecting</div>
<div class="t" style="left:451.30px;top:916.81px;font-size:14.2px;line-height:20px;color:#414d57;font-weight:normal;letter-spacing:-0.237px;word-spacing:-1.05px;">$10,000.00</div>
<div class="t" style="left:578.30px;top:916.81px;font-size:14.2px;line-height:20px;color:#414d57;font-weight:normal;letter-spacing:-0.121px;word-spacing:-1.05px;">2022-09-18</div>
<div class="t" style="left:705.20px;top:916.95px;font-size:13.8px;line-height:20px;color:#ee8380;font-weight:normal;letter-spacing:0.000px;word-spacing:-1.05px;-webkit-text-stroke:0.65px #ee8380;">max</div>
<svg style="position:absolute;left:846px;top:918.65px" width="15" height="15" viewBox="0 0 15 15"><path d="M3.2 1.2 Q2 1.6 1.4 2.8 Q0.9 4.4 1.8 6.2 Q3.6 9.6 6.6 12 Q8.6 13.6 10.6 14 Q12 14.2 13 13.4 Q13.9 12.6 13.5 11.7 L12 10.2 Q11.2 9.6 10.5 10.2 L9.6 11 Q7.3 10 5.3 7.4 Q4.4 6 4.3 5.3 L5.1 4.6 Q5.8 3.9 5.3 3.1 L4.3 1.5 Q3.9 1 3.2 1.2 Z" fill="#a396c9"/></svg>
<svg style="position:absolute;left:870px;top:919.55px" width="13" height="14" viewBox="0 0 13 14"><rect x="2.2" y="0" width="1" height="2.2" fill="#a396c9"/><rect x="9.8" y="0" width="1" height="2.2" fill="#a396c9"/><rect x="0" y="1.6" width="13" height="2.9" fill="#a396c9" opacity="0.9"/><rect x="0.5" y="2" width="12" height="11.4" fill="none" stroke="#a396c9" stroke-width="1"/><rect x="2" y="6" width="9" height="5.6" fill="#a396c9"/><g fill="#fff" opacity="0.75"><rect x="4.1" y="6" width="0.6" height="5.6"/><rect x="6.2" y="6" width="0.6" height="5.6"/><rect x="8.3" y="6" width="0.6" height="5.6"/><rect x="2" y="7.7" width="9" height="0.5"/><rect x="2" y="9.6" width="9" height="0.5"/></g></svg>
<svg style="position:absolute;left:894px;top:922.55px" width="11" height="8" viewBox="0 0 11 8"><g fill="#958cb5"><rect x="0" y="0" width="2.7" height="2.8"/><rect x="0" y="4.9" width="2.7" height="2.8"/><rect x="4.3" y="0.8" width="6.6" height="1.5"/><rect x="4.3" y="5.7" width="6.6" height="1.5"/></g></svg>
<svg style="position:absolute;left:916px;top:921.85px" width="14" height="10" viewBox="0 0 14 10"><rect x="0.6" y="0.6" width="12.8" height="8.8" fill="none" stroke="#b3aec0" stroke-width="1.2"/><path d="M1 1 L7 6.3 L13 1 M1 9 L5 5.3 M13 9 L9 5.3" fill="none" stroke="#b3aec0" stroke-width="0.8"/></svg>
<div style="position:absolute;left:15px;top:959.00px;width:932px;height:2.00px;background:#fff"></div>
<div style="position:absolute;left:962px;top:213px;width:305px;height:699px;background:#fff;box-shadow:0 1px 4px rgba(0,0,0,0.18);border-radius:3px 3px 0 0"></div>
<div style="position:absolute;left:962px;top:213px;width:305px;height:3px;background:#4a4458;border-radius:3px 3px 0 0"></div>
<div class="t" style="left:975.60px;top:222.92px;font-size:13.5px;line-height:20px;color:#3b3f4b;font-weight:bold;letter-spacing:-0.302px;">Quick Charts</div>
<div style="position:absolute;left:974px;top:258px;width:279px;height:36px;border:1px solid #d2d2d2;border-radius:3px;background:#fff"></div>
<div class="t" style="left:983.30px;top:267.73px;font-size:13.2px;line-height:20px;color:#6a6a6a;font-weight:normal;letter-spacing:-0.160px;word-spacing:-0.99px;">Pipeline By Sales Stage</div>
<div class="caret" style="left:1229.6px;top:273.6px;border-left:5.5px solid transparent;border-right:5.5px solid transparent;border-top:7px solid #555"></div>
<div style="position:absolute;left:1062px;top:386.90px;width:186px;height:1px;background:#e3e3e3"></div>
<div class="t" style="left:980.80px;top:378.09px;font-size:11px;line-height:20px;color:#222;font-weight:normal;letter-spacing:0.593px;">$300,000.00</div>
<div style="position:absolute;left:1062px;top:459.70px;width:186px;height:1px;background:#e3e3e3"></div>
<div class="t" style="left:980.80px;top:450.89px;font-size:11px;line-height:20px;color:#222;font-weight:normal;letter-spacing:0.593px;">$200,000.00</div>
<div style="position:absolute;left:1062px;top:532.60px;width:186px;height:1px;background:#e3e3e3"></div>
<div class="t" style="left:980.80px;top:523.79px;font-size:11px;line-height:20px;color:#222;font-weight:normal;letter-spacing:0.593px;">$100,000.00</div>
<div style="position:absolute;left:1062px;top:605.5px;width:186px;height:1px;background:#e3e3e3"></div>
<div class="t" style="left:1018.00px;top:595.99px;font-size:11px;line-height:20px;color:#222;font-weight:normal;letter-spacing:0.545px;">$0.00</div>
<div style="position:absolute;left:1062.2px;top:471.8px;width:10.8px;height:134.00px;background:#ffc20e;border-radius:5.4px 5.4px 0 0"></div>
<div style="position:absolute;left:1081.5px;top:478.8px;width:10.8px;height:127.00px;background:#00b65f;border-radius:5.4px 5.4px 0 0"></div>
<div style="position:absolute;left:1101px;top:464px;width:10.8px;height:141.80px;background:#ff9f0a;border-radius:5.4px 5.4px 0 0"></div>
<div style="position:absolute;left:1120.2px;top:326px;width:10.8px;height:279.80px;background:#06b899;border-radius:5.4px 5.4px 0 0"></div>
<div style="position:absolute;left:1139.8px;top:446px;width:10.8px;height:159.80px;background:#fe6c56;border-radius:5.4px 5.4px 0 0"></div>
<div style="position:absolute;left:1159.1px;top:348.2px;width:10.8px;height:257.60px;background:#00abd6;border-radius:5.4px 5.4px 0 0"></div>
<div style="position:absolute;left:1178.5px;top:424.1px;width:10.8px;height:181.70px;background:#d82c2c;border-radius:5.4px 5.4px 0 0"></div>
<div style="position:absolute;left:1198px;top:471.5px;width:10.8px;height:134.30px;background:#0a7fcb;border-radius:5.4px 5.4px 0 0"></div>
<div style="position:absolute;left:1217.3px;top:460.6px;width:10.8px;height:145.20px;background:#9c67bd;border-radius:5.4px 5.4px 0 0"></div>
<div style="position:absolute;left:1237px;top:569.6px;width:10.8px;height:36.20px;background:#5ae3e8;border-radius:5.4px 5.4px 0 0"></div>
<div class="t" style="left:975.60px;top:619.20px;font-size:13px;line-height:20px;color:#222;font-weight:bold;letter-spacing:-0.366px;">Legend</div>
<div style="position:absolute;left:975px;top:642px;width:278px;height:254px;background:#f0f0f0"></div>
<div style="position:absolute;left:983px;top:650.00px;width:15px;height:15px;background:#ffc20e;border-radius:3px"></div>
<div class="t" style="left:1004.00px;top:648.08px;font-size:11.6px;line-height:20px;color:#b7bec7;font-weight:normal;letter-spacing:0.120px;word-spacing:-0.87px;">Value Proposition</div>
<div style="position:absolute;left:983px;top:674.60px;width:15px;height:15px;background:#00b65f;border-radius:3px"></div>
<div class="t" style="left:1004.00px;top:672.68px;font-size:11.6px;line-height:20px;color:#b7bec7;font-weight:normal;letter-spacing:0.114px;">Qualification</div>
<div style="position:absolute;left:983px;top:699.20px;width:15px;height:15px;background:#ff9f0a;border-radius:3px"></div>
<div class="t" style="left:1004.00px;top:697.28px;font-size:11.6px;line-height:20px;color:#b7bec7;font-weight:normal;letter-spacing:0.132px;">Prospecting</div>
<div style="position:absolute;left:983px;top:723.80px;width:15px;height:15px;background:#06b899;border-radius:3px"></div>
<div class="t" style="left:1004.00px;top:721.88px;font-size:11.6px;line-height:20px;color:#b7bec7;font-weight:normal;letter-spacing:0.124px;word-spacing:-0.87px;">Proposal/Price Quote</div>
<div style="position:absolute;left:983px;top:748.40px;width:15px;height:15px;background:#fe6c56;border-radius:3px"></div>
<div class="t" style="left:1004.00px;top:746.48px;font-size:11.6px;line-height:20px;color:#b7bec7;font-weight:normal;letter-spacing:0.120px;word-spacing:-0.87px;">Perception Analysis</div>
<div style="position:absolute;left:983px;top:773.00px;width:15px;height:15px;background:#00abd6;border-radius:3px"></div>
<div class="t" style="left:1004.00px;top:771.08px;font-size:11.6px;line-height:20px;color:#b7bec7;font-weight:normal;letter-spacing:0.127px;">Negotiation/Review</div>
<div style="position:absolute;left:983px;top:797.60px;width:15px;height:15px;background:#d82c2c;border-radius:3px"></div>
<div class="t" style="left:1004.00px;top:795.68px;font-size:11.6px;line-height:20px;color:#b7bec7;font-weight:normal;letter-spacing:0.130px;word-spacing:-0.87px;">Needs Analysis</div>
<div style="position:absolute;left:983px;top:822.20px;width:15px;height:15px;background:#0a7fcb;border-radius:3px"></div>
<div class="t" style="left:1004.00px;top:820.28px;font-size:11.6px;line-height:20px;color:#b7bec7;font-weight:normal;letter-spacing:0.120px;word-spacing:-0.87px;">Id. Decision Makers</div>
<div style="position:absolute;left:983px;top:846.80px;width:15px;height:15px;background:#9c67bd;border-radius:3px"></div>
<div class="t" style="left:1004.00px;top:844.88px;font-size:11.6px;line-height:20px;color:#b7bec7;font-weight:normal;letter-spacing:0.148px;word-spacing:-0.87px;">Closed Won</div>
<div style="position:absolute;left:983px;top:871.40px;width:15px;height:15px;background:#5ae3e8;border-radius:3px"></div>
<div class="t" style="left:1004.00px;top:869.48px;font-size:11.6px;line-height:20px;color:#b7bec7;font-weight:normal;letter-spacing:0.130px;word-spacing:-0.87px;">Closed Lost</div>
</body></html>
